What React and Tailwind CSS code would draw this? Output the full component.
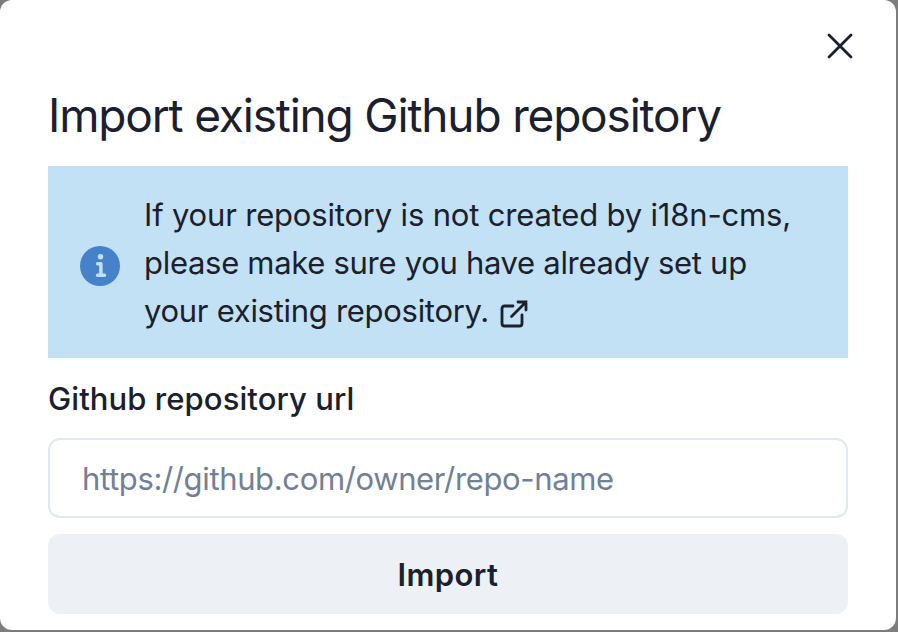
export default function App() {
  return (
    <div className="h-[632px] w-[898px] bg-[#7d7d7d] font-['Inter','Liberation_Sans',sans-serif] text-[#1a202c]">
      <div className="flex h-[630px] w-[896px] flex-col rounded-xl bg-white px-12 pt-4">
        <div className="-mr-[22px] flex justify-end">
          <button className="flex size-[60px] items-center justify-center" aria-label="Close">
            <svg width="26" height="26" viewBox="0 0 26 26" fill="none" stroke="#1a202c" strokeWidth="2.8" strokeLinecap="round">
              <path d="M2 2l22 22M24 2L2 24" />
            </svg>
          </button>
        </div>
        <h1 className="mt-[7px] h-[64px] whitespace-nowrap text-[46px] leading-[64px] tracking-[-1.18px]">Import existing Github repository</h1>
        <div className="mt-[19px] flex h-[192px] items-center bg-[#c3e1f5] pl-8">
          <svg className="mt-2 mr-6 shrink-0" width="40" height="40" viewBox="0 0 40 40">
            <circle cx="20" cy="20" r="20" fill="#4682ca" />
            <circle cx="20.5" cy="10.8" r="2.7" fill="#c3e1f5" />
            <path d="M17.6 17.8H20.9V29M17.5 29.2H24.5" fill="none" stroke="#c3e1f5" strokeWidth="3.5" strokeLinecap="round" strokeLinejoin="round" />
          </svg>
          <div className="pt-px text-[31px] leading-[48px] whitespace-nowrap">
            <p className="tracking-[-0.18px]">If your repository is not created by i18n-cms,</p>
            <p className="tracking-[-0.3px]">please make sure you have already set up</p>
            <p className="flex items-center tracking-[-0.29px]">
              your existing repository.
              <svg className="mt-[7px] ml-[11px]" width="28" height="28" viewBox="0 0 28 28" fill="none" stroke="#1a202c" strokeWidth="2.8" strokeLinecap="round" strokeLinejoin="round">
                <path d="M13 6H4.5Q2 6 2 8.5V23.5Q2 26 4.5 26H19.5Q22 26 22 23.5V15" />
                <path d="M18 2H26V10M26 2L11.5 16.5" strokeLinejoin="miter" />
              </svg>
            </p>
          </div>
        </div>
        <label className="mt-[17px] h-[48px] text-[31px] leading-[48px] font-medium tracking-[0.08px]">Github repository url</label>
        <input className="mt-[15px] h-20 w-[800px] shrink-0 rounded-xl border-2 border-[#e2e8f0] px-8 text-[31px] tracking-[-0.36px] placeholder:text-[#718096]" placeholder="https://github.com/owner/repo-name" />
        <button className="mt-4 h-20 w-[800px] shrink-0 rounded-xl bg-[#edf1f6] pt-[3px] text-[31px] font-semibold tracking-[0.4px]">Import</button>
      </div>
    </div>
  );
}
